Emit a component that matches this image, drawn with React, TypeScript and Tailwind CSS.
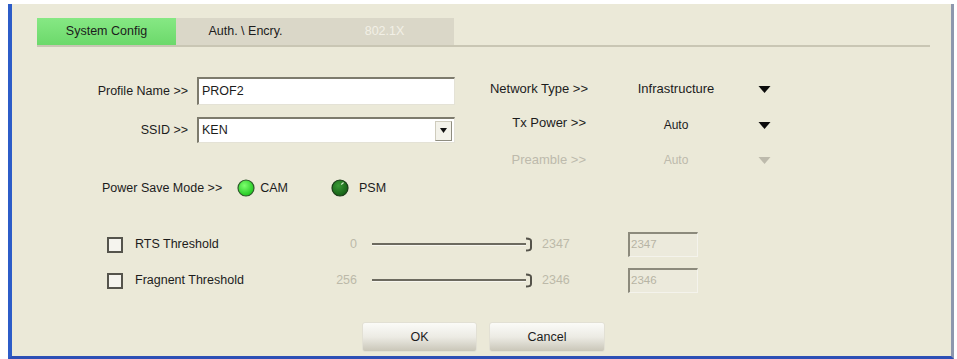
function Arrow({ gray }: { gray?: boolean }) {
  return (
    <svg width="13" height="9" viewBox="0 0 13 9" className="ml-[6px]">
      <path d="M0.5 1 L12.5 1 L6.5 8 Z" fill={gray ? "#bdbaac" : "#0c0c0c"} />
    </svg>
  );
}

function Radio({ on }: { on?: boolean }) {
  return (
    <svg width="18" height="18" viewBox="0 0 18 18">
      <defs>
        <radialGradient id={on ? "gOn" : "gOff"} cx="0.4" cy="0.35" r="0.7">
          <stop offset="0" stopColor={on ? "#7dff6e" : "#3a9a36"} />
          <stop offset="1" stopColor={on ? "#19c21a" : "#125a12"} />
        </radialGradient>
      </defs>
      <circle cx="9" cy="9" r="8" fill={`url(#${on ? "gOn" : "gOff"})`} stroke={on ? "#2f5a2b" : "#1b3c19"} strokeWidth="1.2" />
      {!on && <path d="M10.5 5.2 L12.3 3.8" stroke="#cfe9c9" strokeWidth="1.2" strokeLinecap="round" />}
    </svg>
  );
}

function Slider() {
  return (
    <div className="ml-[15px] w-[161px] h-[16px] flex items-center">
      <div className="flex-1 h-[3px] border-t-2 border-[#6c6a5f] border-b border-b-[#f7f6ef]" />
      <svg width="8" height="15" viewBox="0 0 8 15" className="-ml-[1px]">
        <path d="M1 1.5 Q6 1.5 6 4 L6 11 Q6 13.5 1 13.5" fill="none" stroke="#55534a" strokeWidth="2" />
      </svg>
    </div>
  );
}

function ThresholdRow({ label, min, max }: { label: string; min: string; max: string }) {
  return (
    <div className="flex items-center h-[25px] pl-[95px]">
      <div className="w-[16px] h-[16px] border-2 border-[#55544c] bg-[#f5f4ee]" />
      <div className="ml-[12px] w-[165px]">{label}</div>
      <div className="w-[57px] text-right text-[#bcb9a9]">{min}</div>
      <Slider />
      <div className="ml-[9px] w-[86px] text-[#bcb9a9]">{max}</div>
      <div className="w-[70px] h-[25px] border-t-2 border-l-2 border-[#8c8a7c] border-r border-b border-r-[#f4f3ec] border-b-[#f4f3ec] bg-[#eceadc] pl-[1px] pt-[2px] text-[11.5px] text-[#b7b4a4]">
        {max}
      </div>
    </div>
  );
}

export default function App() {
  return (
    <div className="w-[957px] h-[359px] bg-white pt-[4px] pl-[8px] font-['Liberation_Sans',Arial,sans-serif] text-[12.5px] text-[#1c1c1c]">
      <div className="w-[946px] h-[355px] bg-[#ebe9d8] border-l-4 border-l-[#2c5cc8] border-r-[3px] border-r-[#8e97ad] border-b-[3px] border-b-[#2d4fb5] flex flex-col">
        {/* Tabs */}
        <div className="ml-[25px] mt-[14px] w-[893px] border-b-2 border-[#c9c6b4]">
          <div className="flex h-[27px]">
            <div className="w-[139px] flex items-center justify-center bg-gradient-to-b from-[#86e884] to-[#6cd96b]">System Config</div>
            <div className="w-[139px] flex items-center justify-center bg-[#dad7c8]">Auth. \ Encry.</div>
            <div className="w-[139px] flex items-center justify-center bg-[#dad7c8] text-[#f2f0e6]">802.1X</div>
          </div>
        </div>

        {/* Upper form */}
        <div className="flex h-[123px]">
          <div className="flex flex-col">
            <div className="flex items-center mt-[30px]">
              <div className="w-[176px] text-right">Profile Name &gt;&gt;</div>
              <div className="ml-[9px] w-[258px] h-[28px] bg-white border-t-2 border-l-2 border-[#7d7b6d] border-r border-b border-r-[#e4e2d6] border-b-[#e4e2d6] flex items-center pl-[3px]">
                PROF2
              </div>
            </div>
            <div className="flex items-center mt-[12px]">
              <div className="w-[176px] text-right">SSID &gt;&gt;</div>
              <div className="ml-[9px] w-[258px] h-[26px] bg-white border-t-2 border-l-2 border-[#7d7b6d] border-r border-b border-r-[#e4e2d6] border-b-[#e4e2d6] flex items-center pl-[3px]">
                <span className="flex-1">KEN</span>
                <div className="w-[17px] h-[20px] mr-[2px] border border-[#cfccbd] border-r-[#8f8d80] border-b-[#8f8d80] bg-[#f3f2ea] flex items-center justify-center">
                  <svg width="7" height="5" viewBox="0 0 7 5">
                    <path d="M0 0 L7 0 L3.5 5 Z" fill="#111" />
                  </svg>
                </div>
              </div>
            </div>
          </div>

          <div className="ml-[15px] flex flex-col text-[13px]">
            <div className="flex items-center h-[20px] mt-[32px]">
              <div className="w-[118px] text-right">Network Type &gt;&gt;</div>
              <div className="ml-[12px] w-[152px] text-center">Infrastructure</div>
              <Arrow />
            </div>
            <div className="flex items-center h-[20px] mt-[16px]">
              <div className="w-[116px] text-right -mt-[4px]">Tx Power &gt;&gt;</div>
              <div className="ml-[14px] w-[152px] text-center text-[12px]">Auto</div>
              <Arrow />
            </div>
            <div className="flex items-center h-[20px] mt-[15px] text-[#bdbaac]">
              <div className="w-[116px] text-right">Preamble &gt;&gt;</div>
              <div className="ml-[14px] w-[152px] text-center text-[12px]">Auto</div>
              <Arrow gray />
            </div>
          </div>
        </div>

        {/* Power save */}
        <div className="flex items-center h-[18px] mt-[9px] pl-[90px]">
          <span>Power Save Mode &gt;&gt;</span>
          <span className="ml-[15px] flex"><Radio on /></span>
          <span className="ml-[5px]">CAM</span>
          <span className="ml-[43px] flex"><Radio /></span>
          <span className="ml-[10px]">PSM</span>
        </div>

        {/* Thresholds */}
        <div className="mt-[35px]">
          <ThresholdRow label="RTS Threshold" min="0" max="2347" />
        </div>
        <div className="mt-[11px]">
          <ThresholdRow label="Fragnent Threshold" min="256" max="2346" />
        </div>

        {/* Buttons */}
        <div className="flex mt-[29px] pl-[350px] gap-[12px]">
          <button className="w-[115px] h-[30px] rounded-[3px] bg-gradient-to-b from-[#fbfbf8] via-[#ecebe4] to-[#c9c6b8] border border-[#e2e0d4] text-[12.5px]">
            OK
          </button>
          <button className="w-[116px] h-[30px] rounded-[3px] bg-gradient-to-b from-[#fbfbf8] via-[#ecebe4] to-[#c9c6b8] border border-[#e2e0d4] text-[12.5px]">
            Cancel
          </button>
        </div>
      </div>
    </div>
  );
}
